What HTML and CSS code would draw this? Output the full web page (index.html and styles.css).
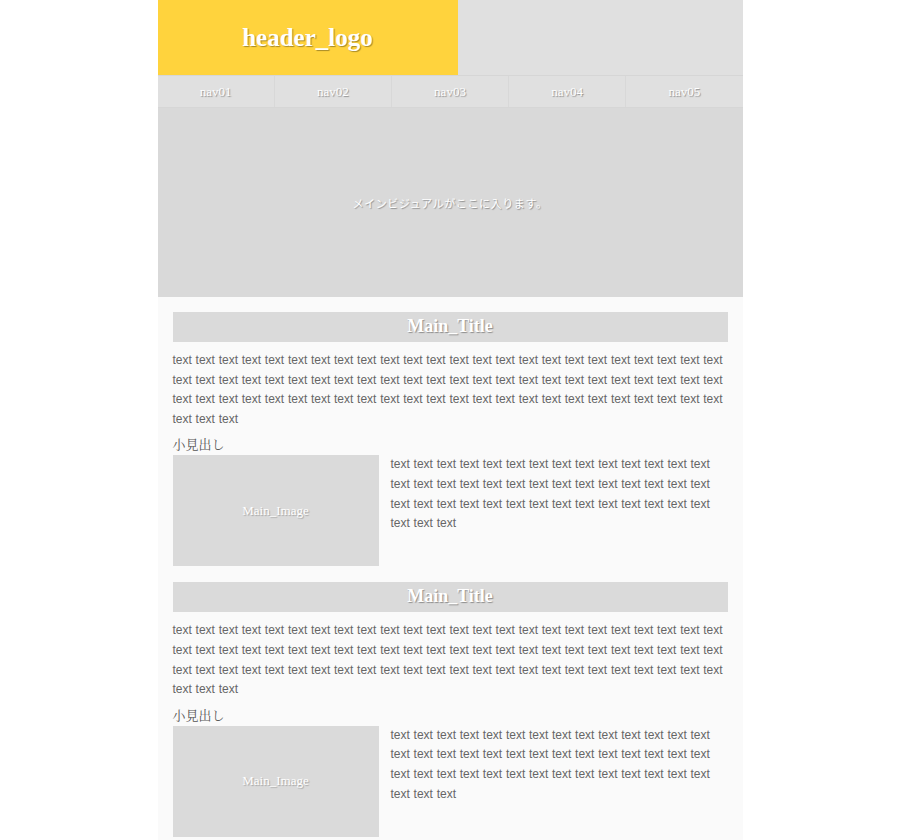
FILE: index.html
```html
<!DOCTYPE html>
<html lang="ja">
<head>
<meta charset="utf-8">
<title>layout</title>
<link rel="stylesheet" href="styles.css">
</head>
<body>
<div class="wrap">
  <header class="header">
    <div class="logo">header_logo</div>
    <div class="header-side"></div>
  </header>
  <nav class="nav">
    <a class="nav-item">nav01</a>
    <a class="nav-item">nav02</a>
    <a class="nav-item">nav03</a>
    <a class="nav-item">nav04</a>
    <a class="nav-item">nav05</a>
  </nav>
  <div class="visual">メインビジュアルがここに入ります。</div>
  <main class="main">
    <section class="section">
      <h2 class="title">Main_Title</h2>
      <p class="lead">text text text text text text text text text text text text text text text text text text text text text text text text text text text text text text text text text text text text text text text text text text text text text text text text text text text text text text text text text text text text text text text text text text text text text text text text text text text</p>
      <h3 class="sub">小見出し</h3>
      <div class="media">
        <div class="image">Main_Image</div>
        <p class="media-text">text text text text text text text text text text text text text text text text text text text text text text text text text text text text text text text text text text text text text text text text text text text text text</p>
      </div>
    </section>
    <section class="section">
      <h2 class="title">Main_Title</h2>
      <p class="lead">text text text text text text text text text text text text text text text text text text text text text text text text text text text text text text text text text text text text text text text text text text text text text text text text text text text text text text text text text text text text text text text text text text text text text text text text text text text</p>
      <h3 class="sub">小見出し</h3>
      <div class="media">
        <div class="image">Main_Image</div>
        <p class="media-text">text text text text text text text text text text text text text text text text text text text text text text text text text text text text text text text text text text text text text text text text text text text text text</p>
      </div>
    </section>
  </main>
</div>
</body>
</html>
```
FILE: styles.css
```css
* { box-sizing: border-box; }
html, body { margin: 0; padding: 0; background: #ffffff; }
body { font-family: "Liberation Serif", "Noto Sans CJK JP", serif; color: #555; }
.wrap { width: 585px; margin: 0 auto; background: #fafafa; min-height: 840px; }
.header { display: flex; height: 76px; border-bottom: 1px solid #d6d6d6; }
.logo {
  width: 300px; background: #ffd33d; color: #fff;
  display: flex; align-items: center; justify-content: center;
  font-size: 25px; font-weight: bold;
  text-shadow: 1px 1px 1px rgba(0,0,0,0.35);
}
.header-side { flex: 1; background: #e0e0e0; }
.nav { display: flex; height: 32px; background: #e0e0e0; border-bottom: 1px solid #d6d6d6; }
.nav-item {
  flex: 1; display: flex; align-items: center; justify-content: center;
  color: #fff; font-size: 13px; border-right: 1px solid #d8d8d8;
  text-shadow: 1px 1px 1px rgba(0,0,0,0.35);
}
.nav-item:last-child { border-right: none; }
.visual {
  height: 189px; background: #d9d9d9; color: #fff;
  display: flex; align-items: center; justify-content: center;
  font-family: "Noto Sans CJK JP", sans-serif;
  font-size: 11px; letter-spacing: 0.6px;
  text-shadow: 1px 1px 1px rgba(0,0,0,0.35);
}
.main { padding: 15px 15px 0; }
.section { margin-bottom: 16px; }
.title {
  margin: 0; height: 30px; background: #dadada; color: #fff;
  display: flex; align-items: center; justify-content: center;
  font-size: 18px; font-weight: bold; padding-bottom: 2px;
  text-shadow: 1px 1px 1px rgba(0,0,0,0.35);
}
.lead, .media-text {
  font-family: "Liberation Sans", sans-serif;
  font-size: 12px; line-height: 19.6px; color: #666;
  word-spacing: 0.4px;
}
.lead { margin: 9px 0 0; }
.sub {
  margin: 7px 0 3px; font-size: 13px; font-weight: normal; color: #555;
  line-height: 16px;
  font-family: "Noto Serif CJK JP", "Noto Sans CJK JP", serif;
}
.media { display: flex; gap: 12px; }
.image {
  width: 206px; height: 111px; flex: none; background: #dadada; color: #fff;
  display: flex; align-items: center; justify-content: center;
  font-size: 13px;
  text-shadow: 1px 1px 1px rgba(0,0,0,0.25);
}
.media-text { margin: 0; padding-top: 0; flex: 1; }
```
